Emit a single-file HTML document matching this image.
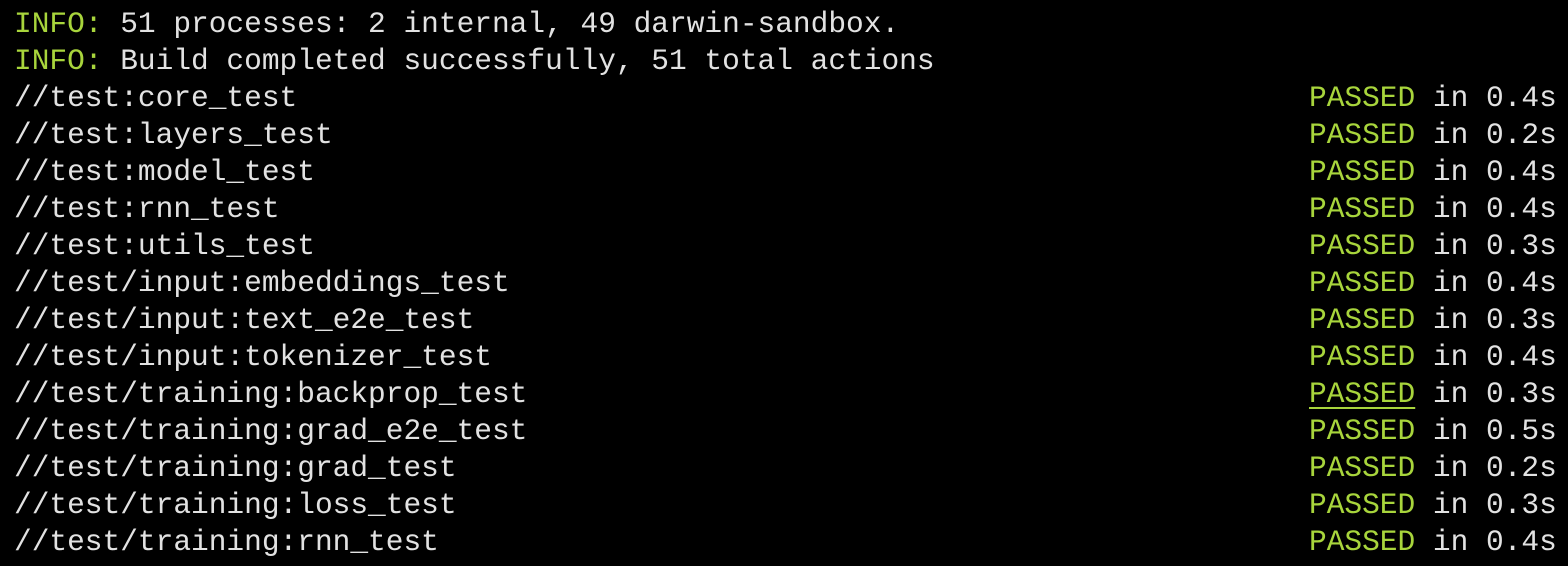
<!DOCTYPE html>
<html><head><style>
html,body{margin:0;padding:0;background:#000;width:1568px;height:566px;overflow:hidden}
pre{margin:0;position:absolute;left:14px;top:6px;font-family:"Liberation Mono","DejaVu Sans Mono",monospace;font-size:29.5px;line-height:37px;color:#e2e2e2}
.g{color:#a8d53c}
.u{text-decoration:underline;text-underline-offset:5px}
</style></head><body>
<pre><span class="g">INFO:</span> 51 processes: 2 internal, 49 darwin-sandbox.
<span class="g">INFO:</span> Build completed successfully, 51 total actions
//test:core_test
//test:layers_test
//test:model_test
//test:rnn_test
//test:utils_test
//test/input:embeddings_test
//test/input:text_e2e_test
//test/input:tokenizer_test
//test/training:backprop_test
//test/training:grad_e2e_test
//test/training:grad_test
//test/training:loss_test
//test/training:rnn_test</pre>
<pre style="left:1309px;top:80px"><span class="g">PASSED</span> in 0.4s
<span class="g">PASSED</span> in 0.2s
<span class="g">PASSED</span> in 0.4s
<span class="g">PASSED</span> in 0.4s
<span class="g">PASSED</span> in 0.3s
<span class="g">PASSED</span> in 0.4s
<span class="g">PASSED</span> in 0.3s
<span class="g">PASSED</span> in 0.4s
<span class="g u">PASSED</span> in 0.3s
<span class="g">PASSED</span> in 0.5s
<span class="g">PASSED</span> in 0.2s
<span class="g">PASSED</span> in 0.3s
<span class="g">PASSED</span> in 0.4s</pre>
</body></html>
